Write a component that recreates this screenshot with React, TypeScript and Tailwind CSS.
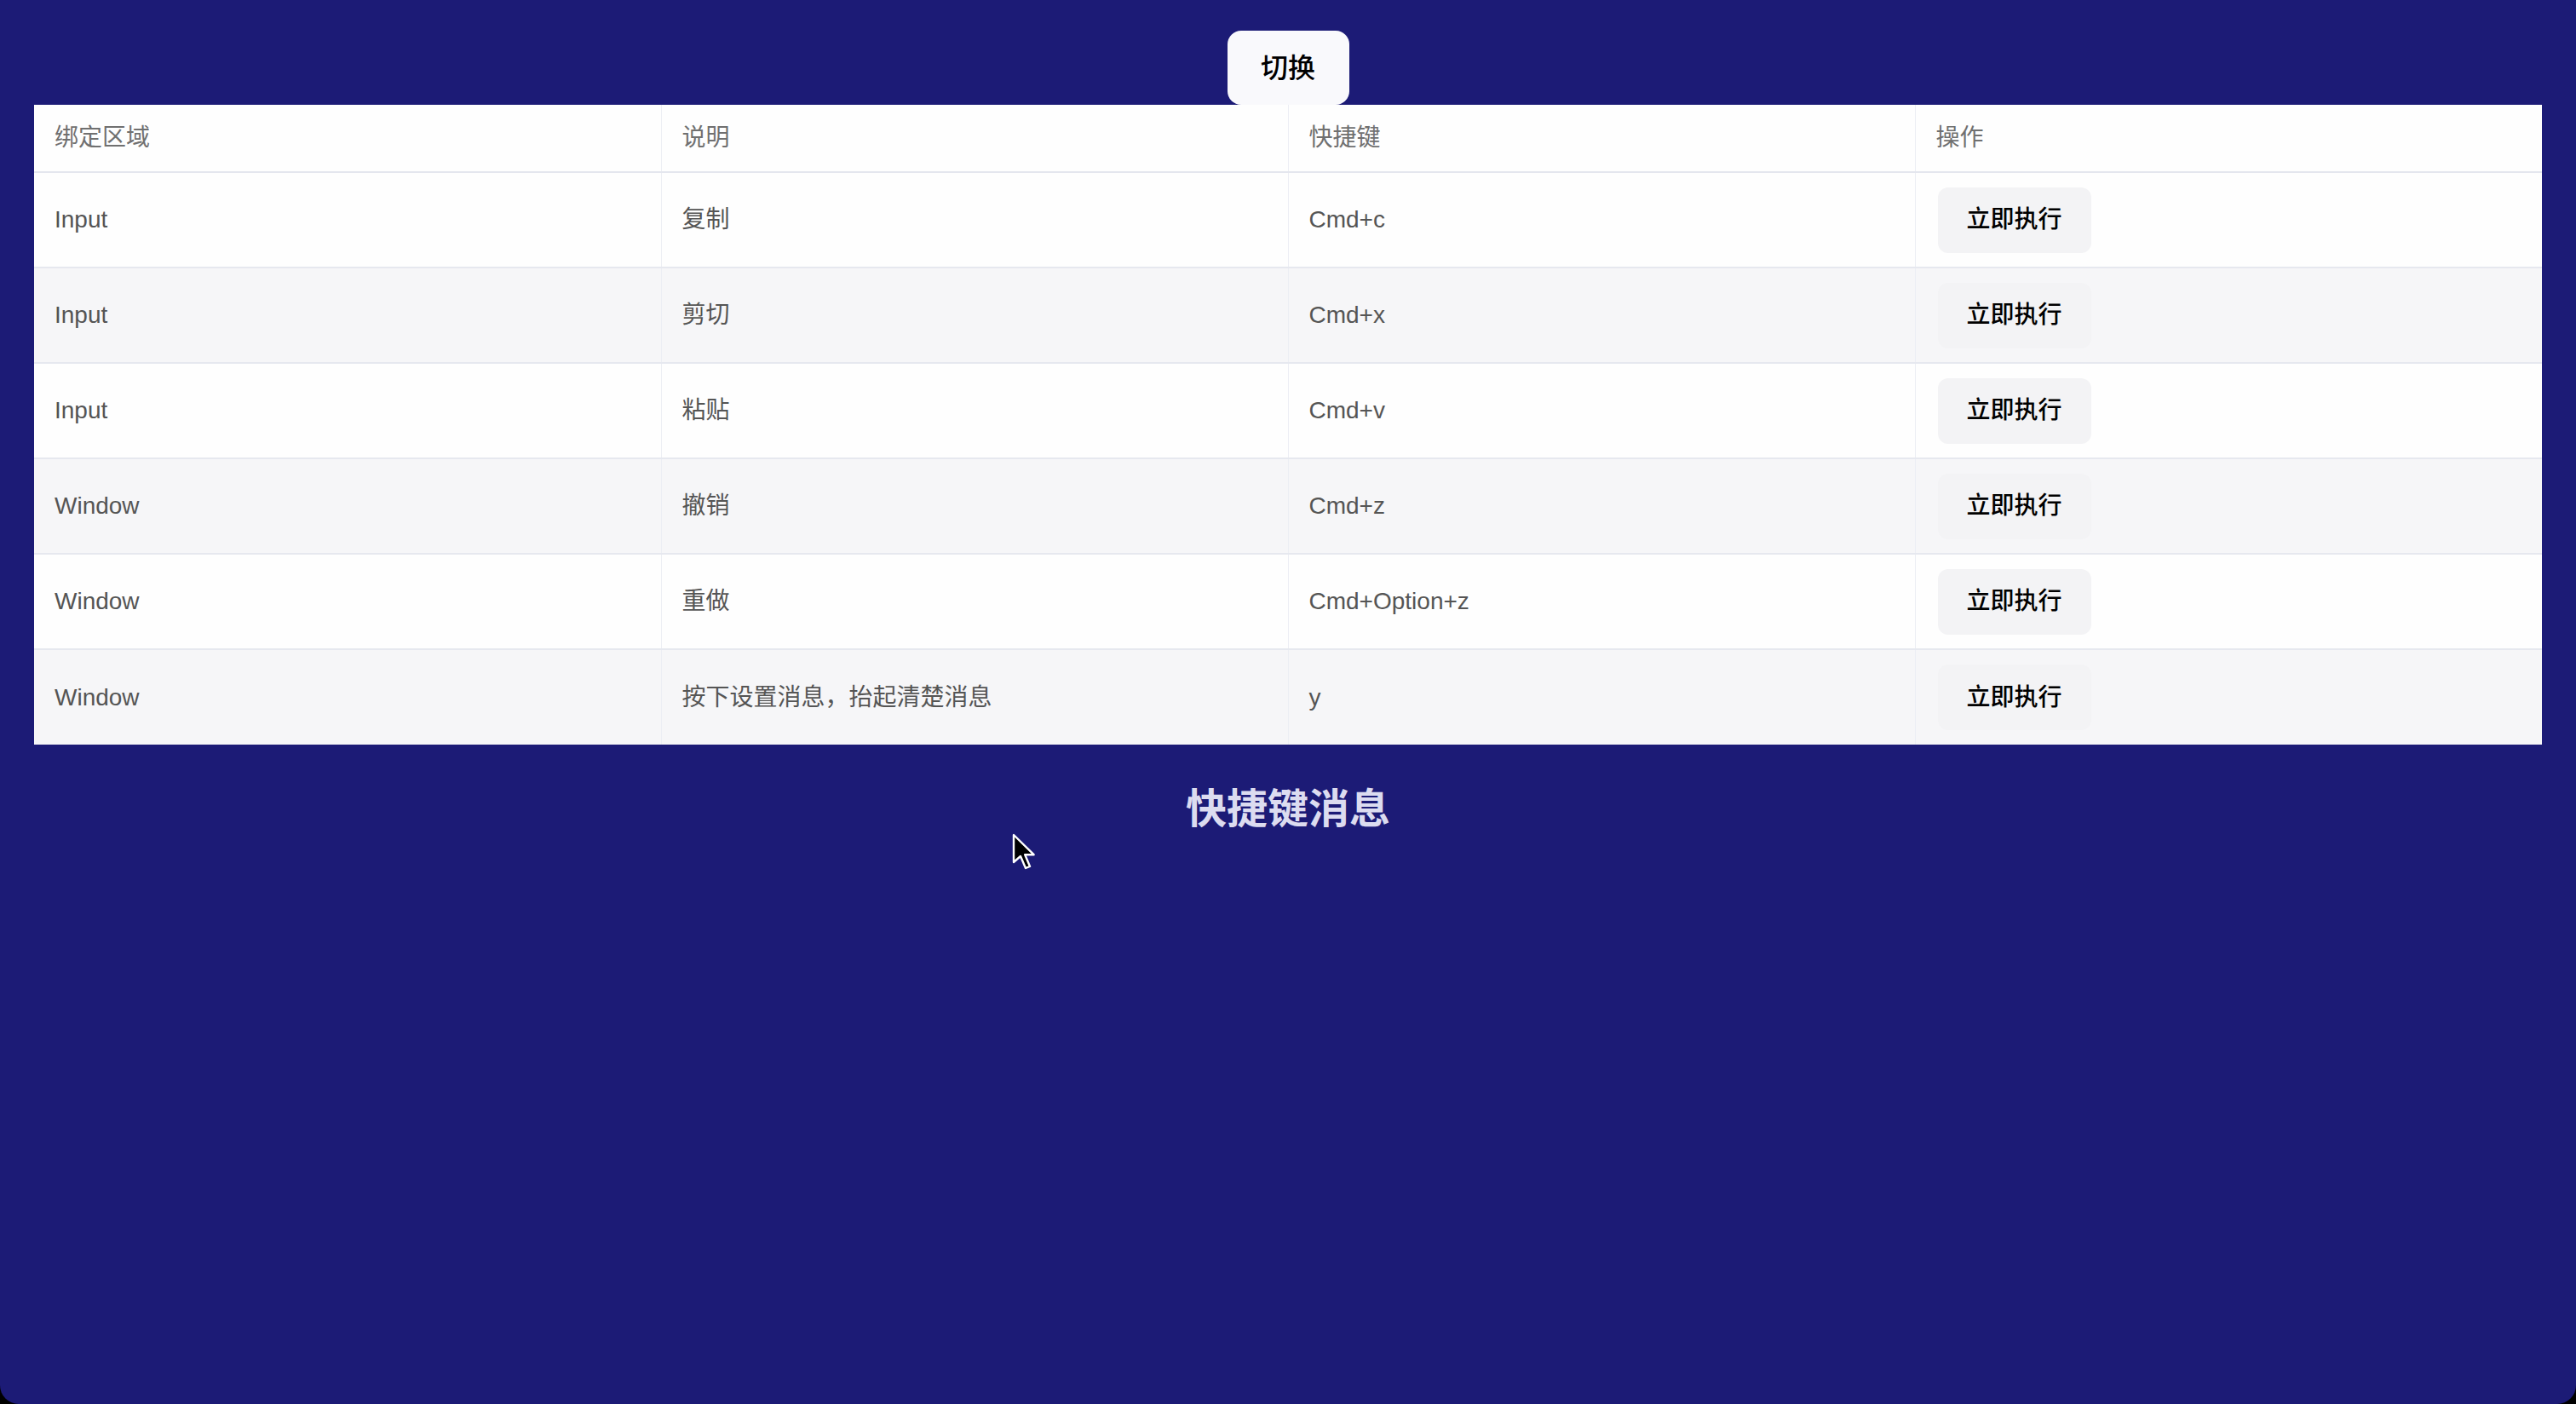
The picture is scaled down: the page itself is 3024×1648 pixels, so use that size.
import React from 'react'

const rows = [
  { area: 'Input', desc: '复制', key: 'Cmd+c' },
  { area: 'Input', desc: '剪切', key: 'Cmd+x' },
  { area: 'Input', desc: '粘贴', key: 'Cmd+v' },
  { area: 'Window', desc: '撤销', key: 'Cmd+z' },
  { area: 'Window', desc: '重做', key: 'Cmd+Option+z' },
  { area: 'Window', desc: '按下设置消息，抬起清楚消息', key: 'y' },
]

const font = { fontFamily: '"Liberation Sans", "Noto Sans CJK SC", sans-serif' }

function Cursor() {
  return (
    <svg className="absolute left-[1188px] top-[978px]" width="30" height="44" viewBox="0 0 15 22">
      <path d="M1 1 L1 17 L5 13.5 L8 20.5 L10.5 19.5 L7.6 12.6 L12.8 12.6 Z" fill="#000" stroke="#fff" strokeWidth="1.2" strokeLinejoin="round" />
    </svg>
  )
}

export default function App() {
  return (
    <div className="h-[1648px] w-[3024px] bg-black" style={font}>
      <div className="relative flex h-[1648px] flex-col items-center rounded-b-[22px] bg-[#1c1b76]">
        <button className="mt-[36px] h-[87px] w-[143px] rounded-[16px] bg-[#f9f9fc] text-[32px] font-medium text-black">
          切换
        </button>
        <table className="w-[2944px] table-fixed border-collapse bg-white text-[28px]">
          <thead>
            <tr className="h-[79px] border-b-2 border-[#e4e6ee] bg-[#fefefe]">
              {['绑定区域', '说明', '快捷键', '操作'].map((h, i) => (
                <th
                  key={h}
                  className={`px-[24px] text-left font-normal text-[#707070] ${i > 0 ? 'border-l border-[#eceef4]' : ''}`}
                >
                  {h}
                </th>
              ))}
            </tr>
          </thead>
          <tbody>
            {rows.map((r, i) => (
              <tr
                key={i}
                className={`h-[112px] text-[#555555] ${i < rows.length - 1 ? 'border-b-2 border-[#e6e8ef]' : ''} ${i % 2 === 1 ? 'bg-[#f6f6f8]' : 'bg-[#fefefe]'}`}
              >
                <td className="px-[24px]">{r.area}</td>
                <td className="border-l border-[#eceef4] px-[24px]">{r.desc}</td>
                <td className="border-l border-[#eceef4] px-[24px]">{r.key}</td>
                <td className="border-l border-[#eceef4] px-[26px]">
                  <button className="h-[77px] rounded-[12px] bg-[#f3f3f5] px-[34px] text-[28px] font-medium text-black">
                    立即执行
                  </button>
                </td>
              </tr>
            ))}
          </tbody>
        </table>
        <h2 className="mt-[40px] text-[48px] font-bold leading-[72px] text-[#dcdcf0]">快捷键消息</h2>
        <Cursor />
      </div>
    </div>
  )
}
